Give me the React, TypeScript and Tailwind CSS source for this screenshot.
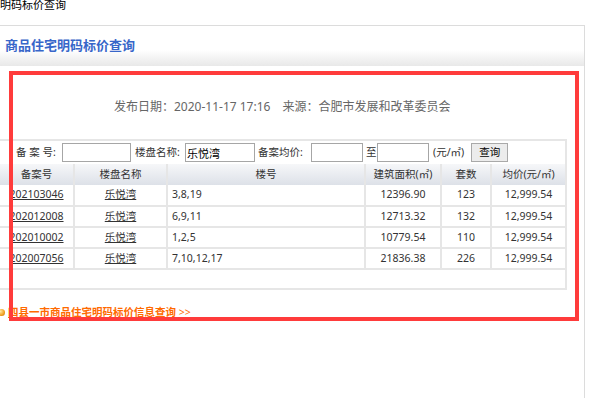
const ROWS = [
  { no: "202103046", name: "乐悦湾", building: "3,8,19", area: "12396.90", units: "123", price: "12,999.54" },
  { no: "202012008", name: "乐悦湾", building: "6,9,11", area: "12713.32", units: "132", price: "12,999.54" },
  { no: "202010002", name: "乐悦湾", building: "1,2,5", area: "10779.54", units: "110", price: "12,999.54" },
  { no: "202007056", name: "乐悦湾", building: "7,10,12,17", area: "21836.38", units: "226", price: "12,999.54" },
];

const HEADERS = ["备案号", "楼盘名称", "楼号", "建筑面积(㎡)", "套数", "均价(元/㎡)"];

function FilterBar() {
  return (
    <div className="flex h-[23px] items-center pl-[16px] text-[10.5px] whitespace-nowrap text-[#333]">
      <span className="w-[46px] shrink-0">备 案 号:</span>
      <input className="h-[19px] w-[69px] shrink-0 border border-[#a6a6a6] bg-white" />
      <span className="ml-[4px] w-[50px] shrink-0">楼盘名称:</span>
      <input
        defaultValue="乐悦湾"
        className="h-[19px] w-[70px] shrink-0 border border-[#a6a6a6] bg-white px-[1px] text-[11px] text-black"
      />
      <span className="ml-[3px] w-[53px] shrink-0">备案均价:</span>
      <input className="h-[19px] w-[52px] shrink-0 border border-[#a6a6a6] bg-white" />
      <span className="ml-[3px] w-[11px] shrink-0">至</span>
      <input className="h-[19px] w-[52px] shrink-0 border border-[#a6a6a6] bg-white" />
      <span className="ml-[4px]">(元/㎡)</span>
      <button className="ml-[7px] h-[19px] w-[37px] shrink-0 border border-[#a9a9a9] bg-[#ececec] text-[10.5px] text-black">
        查询
      </button>
    </div>
  );
}

export default function App() {
  return (
    <div className="relative h-[398px] w-[600px] overflow-hidden bg-white font-['Noto_Sans','Noto_Sans_CJK_SC',sans-serif]">
      <div className="-mt-[1px] h-[26px] text-[11px] leading-[12px] text-black">明码标价查询</div>

      <div className="h-[380px] w-[585px] border-t border-r border-[#dcdcdc]">
        <div className="flex h-[40px] items-center bg-[linear-gradient(to_bottom,#ffffff_60%,#e8e8e8)] pl-[5px] text-[13px] font-bold text-[#3766c9]">
          商品住宅明码标价查询
        </div>

        <div className="flex w-[567px] pt-[31px] pl-[114px] text-[12px] leading-[20px] text-[#666]">
          <span>发布日期：2020-11-17 17:16</span>
          <span className="ml-[12px]">来源：合肥市发展和改革委员会</span>
        </div>

        <div className="mt-[22px] w-[567px] border-2 border-l-0 border-[#e6e6e6]">
          <FilterBar />
          <table className="w-full table-fixed border-collapse text-[10.5px] text-[#333]">
            <colgroup>
              <col className="w-[74px]" />
              <col className="w-[93px]" />
              <col className="w-[198px]" />
              <col className="w-[76px]" />
              <col className="w-[50px]" />
              <col />
            </colgroup>
            <thead>
              <tr className="h-[21px] bg-[linear-gradient(to_bottom,#f6f7f9,#dde1e8)]">
                {HEADERS.map((h) => (
                  <th
                    key={h}
                    className="border-x-2 border-[#e6e6e6] font-normal first:border-l-0 last:border-r-0"
                  >
                    {h}
                  </th>
                ))}
              </tr>
            </thead>
            <tbody>
              {ROWS.map((r) => (
                <tr key={r.no} className="h-[21px] border-b-2 border-[#e6e6e6]">
                  <td className="text-center underline">{r.no}</td>
                  <td className="border-l-2 border-[#e6e6e6] text-center underline">{r.name}</td>
                  <td className="border-l-2 border-[#e6e6e6] pl-[4px]">{r.building}</td>
                  <td className="border-l-2 border-[#e6e6e6] text-center">{r.area}</td>
                  <td className="border-l-2 border-[#e6e6e6] text-center">{r.units}</td>
                  <td className="border-l-2 border-[#e6e6e6] text-center">{r.price}</td>
                </tr>
              ))}
              <tr className="h-[19px]">
                <td colSpan={6} />
              </tr>
            </tbody>
          </table>
        </div>

        <div className="mt-[15px] flex items-center">
          <span className="-ml-[2px] h-[7px] w-[7px] rounded-full bg-[radial-gradient(circle_at_35%_35%,#ffe9a0,#f0a020_60%,#b86a00)]" />
          <a className="ml-[3px] text-[10.5px] font-bold text-[#ff6a00] underline">
            四县一市商品住宅明码标价信息查询 <span className="font-normal">&gt;&gt;</span>
          </a>
        </div>
      </div>

      <div className="absolute top-[71px] left-[9px] h-[250px] w-[570px] border-4 border-[#ff3b3b]" />
    </div>
  );
}
